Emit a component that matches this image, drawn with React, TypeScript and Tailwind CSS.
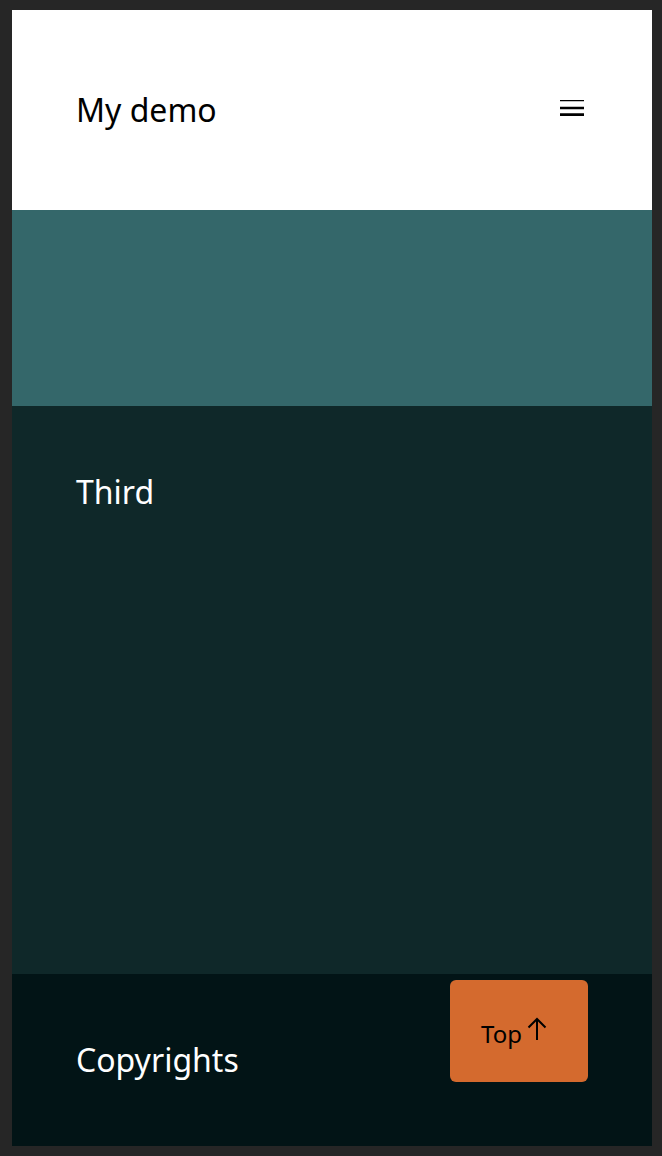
export default function App() {
  return (
    <div className="min-h-screen bg-[#262626] pt-[10px] pb-[10px] pl-[12px] pr-[10px]" style={{ fontFamily: '"Noto Sans", "Open Sans", sans-serif' }}>
      <div className="relative flex flex-col h-[1136px]">
        <header className="bg-white h-[200px] flex items-center justify-between px-16">
          <h1 className="text-[32px] leading-10 text-black">My demo</h1>
          <svg width="32" height="32" viewBox="0 0 24 24" className="mt-[-4px]">
            <path d="M3 18h18v-2H3v2zm0-5h18v-2H3v2zm0-6h18V6H3v2z" fill="#000" />
          </svg>
        </header>
        <section className="bg-[#34676a] h-[196px]"></section>
        <section className="bg-[#0f2829] h-[568px] px-16 pt-[66px]">
          <h2 className="text-[32px] leading-10 text-white">Third</h2>
        </section>
        <footer className="bg-[#021416] h-[172px] flex items-center px-16">
          <p className="text-[32px] leading-[44px] text-white">Copyrights</p>
        </footer>
        <button className="absolute right-16 bottom-16 w-[138px] h-[102px] rounded-[6px] bg-[#d46a2e] flex items-center pl-[31px] text-black">
          <span className="text-[24px] leading-8 mt-[6px]">Top</span>
          <svg width="20" height="24" viewBox="0 0 20 24" className="ml-[5px] mt-[-5px]">
            <path d="M10 23V2M1.5 10.5L10 2l8.5 8.5" stroke="#000" strokeWidth="2" fill="none" />
          </svg>
        </button>
      </div>
    </div>
  );
}
